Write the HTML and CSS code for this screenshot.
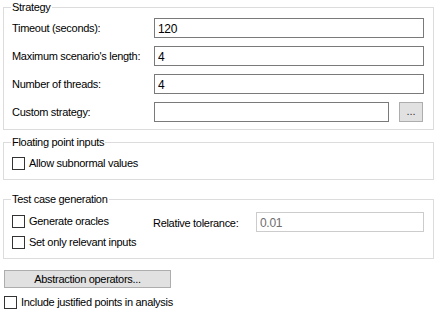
FILE: index.html
```html
<!DOCTYPE html>
<html lang="en">
<head>
  <meta charset="UTF-8">
  <title>Analysis options</title>
  <link rel="stylesheet" href="styles.css">
</head>
<body>
  <div class="panel">
    <fieldset class="group strategy">
      <legend>Strategy</legend>
      <div class="form-grid">
        <label class="field-label">Timeout (seconds):</label>
        <input class="textbox" type="text" value="120">

        <label class="field-label">Maximum scenario's length:</label>
        <input class="textbox" type="text" value="4">

        <label class="field-label">Number of threads:</label>
        <input class="textbox" type="text" value="4">

        <label class="field-label">Custom strategy:</label>
        <div class="browse-row">
          <input class="textbox" type="text" value="">
          <button class="browse-btn" type="button">...</button>
        </div>
      </div>
    </fieldset>

    <fieldset class="group floating">
      <legend>Floating point inputs</legend>
      <label class="check"><span class="box"></span>Allow subnormal values</label>
    </fieldset>

    <fieldset class="group testgen">
      <legend>Test case generation</legend>
      <div class="testgen-grid">
        <div class="check-col">
          <label class="check"><span class="box"></span>Generate oracles</label>
          <label class="check"><span class="box"></span>Set only relevant inputs</label>
        </div>
        <label class="field-label tol-label">Relative tolerance:</label>
        <input class="textbox disabled" type="text" value="0.01" disabled>
      </div>
    </fieldset>

    <button class="wide-btn" type="button">Abstraction operators...</button>

    <label class="check bottom-check"><span class="box"></span>Include justified points in analysis</label>
  </div>
</body>
</html>
```

FILE: styles.css
```css
body {
  margin: 0;
  padding: 0;
  background-color: #fff;
  color: #000;
  font-family: "Liberation Sans", Arial, sans-serif;
  font-size: 11px;
  letter-spacing: -0.3px;
}

.panel {
  width: 438px;
  height: 313px;
  box-sizing: border-box;
  padding: 0 0 0 3px;
}

.group {
  width: 431px;
  box-sizing: border-box;
  margin: 0;
  border: 1px solid #dcdcdc;
  padding: 0 8px 0 8px;
  min-width: 0;
}

.group legend {
  padding: 0 1px;
  margin-left: -1px;
  line-height: 14px;
  height: 14px;
}

.strategy {
  padding-top: 4px;
  padding-bottom: 7px;
}

.form-grid {
  display: grid;
  grid-template-columns: 142px 270px;
  row-gap: 8px;
  align-items: center;
}

.field-label {
  line-height: 13px;
}

.textbox {
  box-sizing: border-box;
  height: 20px;
  width: 100%;
  margin: 0;
  border: 1px solid #7a7a7a;
  padding: 1px 3px 0;
  font-family: "Liberation Sans", Arial, sans-serif;
  font-size: 12px;
  letter-spacing: -0.3px;
  color: #000;
  background: #fff;
  outline: none;
}

.textbox.disabled {
  border-color: #cccccc;
  color: #6d6d6d;
}

.browse-row {
  display: flex;
  gap: 10px;
  align-items: center;
}

.browse-row .textbox {
  width: 235px;
}

.browse-btn {
  box-sizing: border-box;
  width: 24px;
  height: 20px;
  margin: 0;
  padding: 0 0 3px;
  background: #e1e1e1;
  border: 1px solid #adadad;
  font-family: "Liberation Sans", Arial, sans-serif;
  font-size: 11px;
  color: #333;
}

.floating {
  margin-top: 5px;
  padding-top: 8px;
  padding-bottom: 9px;
}

.check {
  display: flex;
  align-items: center;
  gap: 4px;
  line-height: 13px;
  height: 13px;
}

.box {
  box-sizing: border-box;
  width: 13px;
  height: 13px;
  border: 1px solid #333;
  background: #fff;
  flex: none;
}

.testgen {
  margin-top: 12px;
  padding-top: 6px;
  padding-bottom: 9px;
}

.testgen-grid {
  display: grid;
  grid-template-columns: 141px 103px 168px;
  align-items: start;
}

.check-col {
  display: flex;
  flex-direction: column;
  gap: 8px;
  padding-top: 3px;
}

.tol-label {
  padding-top: 5px;
}

.wide-btn {
  display: block;
  box-sizing: border-box;
  margin: 11px 0 0 1px;
  width: 167px;
  height: 18px;
  padding: 0;
  background: #e1e1e1;
  border: 1px solid #adadad;
  font-family: "Liberation Sans", Arial, sans-serif;
  font-size: 11px;
  letter-spacing: -0.3px;
  color: #000;
}

.bottom-check {
  margin: 8px 0 0 1px;
}
```
